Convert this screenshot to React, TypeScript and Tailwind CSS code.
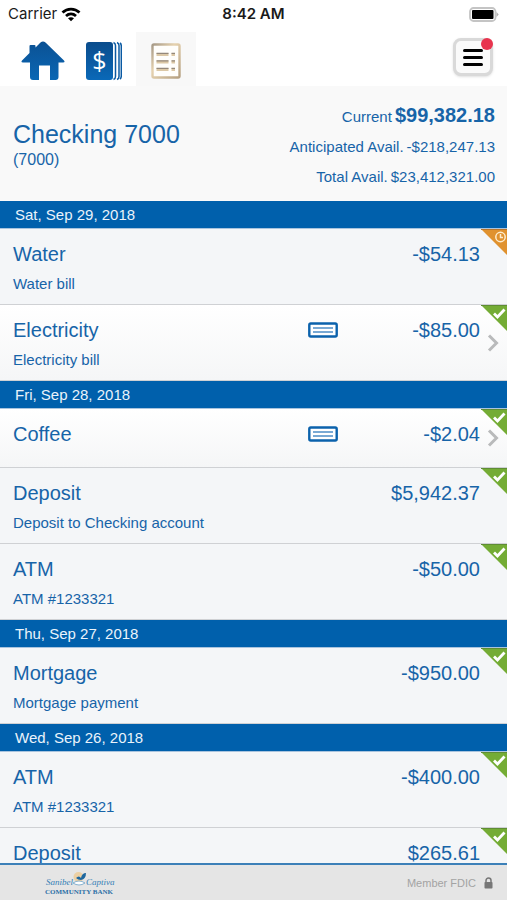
import React from 'react';

type Status = 'pending' | 'cleared';

interface Transaction {
  name: string;
  desc?: string;
  amount: string;
  status: Status;
  check?: boolean;
}

interface Day {
  date: string;
  items: Transaction[];
}

const DAYS: Day[] = [
  {
    date: 'Sat, Sep 29, 2018',
    items: [
      { name: 'Water', desc: 'Water bill', amount: '-$54.13', status: 'pending' },
      { name: 'Electricity', desc: 'Electricity bill', amount: '-$85.00', status: 'cleared', check: true },
    ],
  },
  {
    date: 'Fri, Sep 28, 2018',
    items: [
      { name: 'Coffee', amount: '-$2.04', status: 'cleared', check: true },
      { name: 'Deposit', desc: 'Deposit to Checking account', amount: '$5,942.37', status: 'cleared' },
      { name: 'ATM', desc: 'ATM #1233321', amount: '-$50.00', status: 'cleared' },
    ],
  },
  {
    date: 'Thu, Sep 27, 2018',
    items: [{ name: 'Mortgage', desc: 'Mortgage payment', amount: '-$950.00', status: 'cleared' }],
  },
  {
    date: 'Wed, Sep 26, 2018',
    items: [
      { name: 'ATM', desc: 'ATM #1233321', amount: '-$400.00', status: 'cleared' },
      { name: 'Deposit', amount: '$265.61', status: 'cleared' },
    ],
  },
];

const StatusBar = () => (
  <div className="grid h-8 grid-cols-3 items-center px-2 pb-1 font-['Inter',sans-serif] text-[15px] leading-5 text-[#1a1a1a]">
    <div className="flex items-center gap-1">
      <span>Carrier</span>
      <svg viewBox="0 0 20 15" className="h-[15px] w-5" fill="none" stroke="#000" strokeWidth="2.8">
        <path d="M1.500 5.500c4.800-4.600 12.200-4.600 17 0" />
        <path d="M5 9c3-2.700 7-2.700 10 0" />
        <path d="M10 14.300 7 11.300c1.700-1.400 4.300-1.400 6 0z" fill="#000" stroke="none" />
      </svg>
    </div>
    <span className="text-center font-semibold">8:42 AM</span>
    <svg viewBox="0 0 31 15" className="h-[15px] w-[31px] justify-self-end">
      <rect x="2" y="1" width="25.500" height="13" rx="3.500" fill="#fff" stroke="#c4c4c4" strokeWidth="1.800" />
      <rect x="4" y="3" width="21.500" height="9" rx="1" fill="#000" />
      <path d="M28.500 5v5l2.200-2.500z" fill="#b0b0b0" />
    </svg>
  </div>
);

const HomeIcon = () => (
  <svg viewBox="0 0 44 40" className="h-10 w-11">
    <defs>
      <linearGradient id="homeFill" x1="0" y1="0" x2="0" y2="1">
        <stop offset="0" stopColor="#0b5194" />
        <stop offset="1" stopColor="#0a67b4" />
      </linearGradient>
    </defs>
    <path
      d="M19.500 1.500q2.500-2 5 0L43 19.500q1.500 2-1 2h-4.500V36q0 3-3 3H29V24.500H18V39h-6q-3 0-3-3V21.500H2q-2.500 0-1-2l7.500-7.500V5q0-1 1-1h4q1 0 1 1v1.500z"
      fill="url(#homeFill)"
    />
  </svg>
);

const AccountsIcon = () => (
  <svg viewBox="0 0 36 40" className="h-10 w-9">
    <defs>
      <linearGradient id="bookFill" x1="0" y1="0" x2="0" y2="1">
        <stop offset="0" stopColor="#0a4c8c" />
        <stop offset="1" stopColor="#0a69b8" />
      </linearGradient>
    </defs>
    <rect x="0" y="1" width="27" height="38" rx="3" fill="url(#bookFill)" />
    <path d="M27.500 1.500q2 .8 2 3v31q0 2.200-2 3M31 1.500q2 .8 2 3v31q0 2.200-2 3M34 2q1.300.8 1.300 3v30q0 2.200-1.300 3" fill="none" stroke="#0a5aa3" strokeWidth="1.500" />
    <text x="13.500" y="29" textAnchor="middle" fill="#fff" fontSize="25" fontFamily="Open Sans, sans-serif">
      $
    </text>
  </svg>
);

const RegisterIcon = () => (
  <svg viewBox="0 0 30 36" className="h-9 w-[30px]">
    <defs>
      <linearGradient id="padFrame" x1="0" y1="0" x2="1" y2="1">
        <stop offset="0" stopColor="#a79a87" />
        <stop offset=".4" stopColor="#e6d2af" />
        <stop offset="1" stopColor="#b5a081" />
      </linearGradient>
    </defs>
    <rect x="1.500" y="1.500" width="27" height="33" rx="1.500" fill="#fffefb" stroke="url(#padFrame)" strokeWidth="2.400" />
    <path d="M5.500 11.500h12m3 0h3.500M5.500 19h12m3 0h3.500M5.500 26.500h12m3 0h3.500" stroke="#dcc8a6" strokeWidth="3" />
    <path d="M5.500 10.300h12m3 0h3.500M5.500 17.800h12m3 0h3.500M5.500 25.300h12m3 0h3.500" stroke="#94887a" strokeWidth="1.200" />
  </svg>
);

const NavBar = () => (
  <header className="flex h-[54px] justify-between bg-white px-[14px]">
    <nav className="flex">
      <button aria-label="Home" className="flex w-[58px] items-center justify-center pt-1">
        <HomeIcon />
      </button>
      <button aria-label="Accounts" className="flex w-16 items-center justify-center pt-1">
        <AccountsIcon />
      </button>
      <button aria-label="Register" aria-current="page" className="flex w-[60px] items-center justify-center bg-[#f8f8f8] pt-1">
        <RegisterIcon />
      </button>
    </nav>
    <button
      aria-label="Menu"
      className="relative mt-1.5 flex h-[38px] w-10 flex-col items-center justify-center gap-1 rounded-lg border-[3px] border-[#d9d9d9] bg-[#fafafa] shadow"
    >
      <span className="h-[3px] w-5 rounded-full bg-black" />
      <span className="h-[3px] w-5 rounded-full bg-black" />
      <span className="h-[3px] w-5 rounded-full bg-black" />
      <span className="absolute -right-[3px] -top-[3px] size-3 rounded-full bg-[#e8344e]" />
    </button>
  </header>
);

const Summary = () => (
  <section className="flex h-[115px] justify-between bg-[#f9f9f9] pl-[13px] pr-3">
    <div className="pt-8">
      <h1 className="text-[25px] leading-8">Checking 7000</h1>
      <p className="text-[16px] leading-5">(7000)</p>
    </div>
    <dl className="flex flex-col items-end pt-[14px] text-[15px]">
      <div className="flex h-8 items-baseline gap-[3px]">
        <dt>Current</dt>
        <dd className="text-[20px] font-bold">$99,382.18</dd>
      </div>
      <div className="flex h-[30px] items-center gap-[3px]">
        <dt>Anticipated Avail.</dt>
        <dd>-$218,247.13</dd>
      </div>
      <div className="flex h-[30px] items-center gap-[3px]">
        <dt>Total Avail.</dt>
        <dd>$23,412,321.00</dd>
      </div>
    </dl>
  </section>
);

const StatusCorner = ({ status }: { status: Status }) => (
  <svg viewBox="0 0 26 26" className="absolute right-0 top-0 size-[26px]">
    <path d="M0 0h26v26z" fill={status === 'pending' ? '#e0922f' : '#74ac35'} />
    <path d="M0 .5h26" stroke={status === 'pending' ? '#b9752b' : '#5f8d34'} />
    {status === 'pending' ? (
      <g fill="none" stroke="#fdeccd" strokeWidth="1.500">
        <circle cx="19.500" cy="8" r="4.700" />
        <path d="M19.500 5v3.500H22" />
      </g>
    ) : (
      <path d="M13 8.500l3.500 3.500 7-7.500" fill="none" stroke="#fff" strokeWidth="2.800" />
    )}
  </svg>
);

const CheckIcon = () => (
  <svg viewBox="0 0 30 16" className="h-4 w-[30px]" fill="none">
    <rect x="1.300" y="1.500" width="27.400" height="13" rx="1.500" fill="#fff" stroke="#0b62ac" strokeWidth="2.400" />
    <path d="M5 6h20M5 10h20" stroke="#4d8dc6" strokeWidth="1.600" />
  </svg>
);

const Chevron = () => (
  <svg viewBox="0 0 12 18" className="absolute inset-y-0 right-2 my-auto h-[18px] w-3" fill="none" stroke="#b9babb" strokeWidth="3">
    <path d="M2 1.500 9.500 9 2 16.500" />
  </svg>
);

const Row = ({ item }: { item: Transaction }) => {
  const rowClass = 'relative flex min-h-[59px] border-b border-[#cfd1d4] pl-[13px] pr-[27px] pt-[13px]';
  const body = (
    <>
      <div className="min-w-0 flex-1">
        <h3 className="text-[20px] leading-6">{item.name}</h3>
        {item.desc && <p className="mb-[10px] mt-2 text-[15px] leading-5">{item.desc}</p>}
      </div>
      {item.check && (
        <span className="flex h-6 items-center">
          <CheckIcon />
        </span>
      )}
      <span className="w-[142px] text-right text-[20px] leading-6">{item.amount}</span>
      <StatusCorner status={item.status} />
      {item.check && <Chevron />}
    </>
  );

  return (
    <li>
      {item.check ? (
        <a href="#check" className={`${rowClass} bg-linear-to-b from-white to-[#f5f6f7]`}>
          {body}
        </a>
      ) : (
        <div className={`${rowClass} bg-[#f4f6f8]`}>{body}</div>
      )}
    </li>
  );
};

const BankLogo = () => (
  <svg viewBox="0 0 76 26" className="h-[26px] w-[76px]" role="img" aria-label="Sanibel Captiva Community Bank">
    <circle cx="34.500" cy="7" r="5" fill="#ecd0a4" />
    <path d="M32 8q3-3 5 0 1-5 5-5 0 6-5 7-3 0-5-2z" fill="#1d679f" />
    <path d="M29 13q6-4 12 0-6 4-12 0z" fill="#fff" stroke="#69a0c7" strokeWidth=".8" />
    <g fill="#347fb5" fontFamily="Liberation Serif, serif" fontStyle="italic" fontSize="9">
      <text x="2" y="15">Sanibel</text>
      <text x="42" y="15">Captiva</text>
    </g>
    <text x="1" y="24" fill="#2c6fa6" fontFamily="Liberation Serif, serif" fontWeight="bold" fontSize="7">
      COMMUNITY BANK
    </text>
  </svg>
);

const Footer = () => (
  <footer className="flex h-[37px] shrink-0 items-center justify-between border-t-2 border-[#3c80b8] bg-[#e5e5e5] pl-11 pr-[14px]">
    <BankLogo />
    <div className="flex items-center gap-2 text-[11px] leading-4 text-[#a3a3a3]">
      <span>Member FDIC</span>
      <svg viewBox="0 0 9 12" className="h-3 w-[9px]">
        <path d="M2 6V3.500a2.500 2.500 0 0 1 5 0V6" fill="none" stroke="#777" strokeWidth="1.500" />
        <rect x=".5" y="5" width="8" height="6.500" rx=".8" fill="#777" />
      </svg>
    </div>
  </footer>
);

export default function App() {
  return (
    <div className="flex h-screen flex-col bg-white font-['Liberation_Sans',Arial,sans-serif] text-[#1764a8]">
      <StatusBar />
      <NavBar />
      <Summary />
      <main className="min-h-0 flex-1 overflow-y-auto [scrollbar-width:none]">
        {DAYS.map((day) => (
          <section key={day.date}>
            <h2 className="h-7 border-b border-[#a9c4de] bg-[#0060ac] px-[15px] text-[15px] leading-7 text-[#eaf3fb]">{day.date}</h2>
            <ul>
              {day.items.map((item) => (
                <Row key={item.name} item={item} />
              ))}
            </ul>
          </section>
        ))}
      </main>
      <Footer />
    </div>
  );
}
